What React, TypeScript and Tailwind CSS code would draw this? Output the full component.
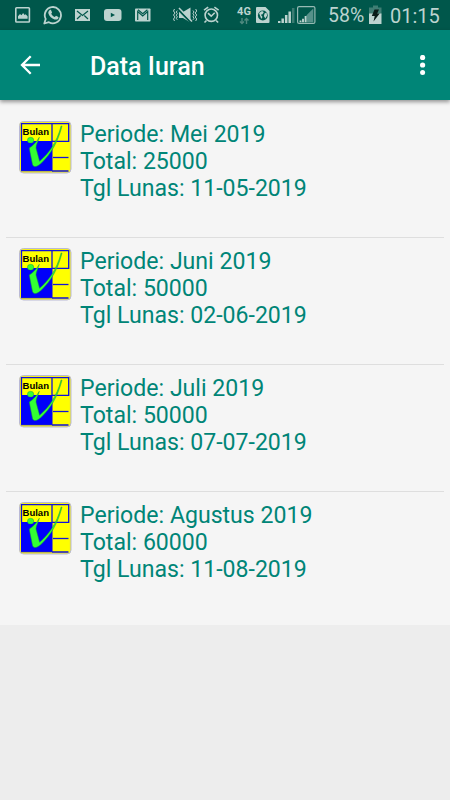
import type { ReactNode } from "react";

type Iuran = { periode: string; total: string; lunas: string };

const DATA: Iuran[] = [
  { periode: "Mei 2019", total: "25000", lunas: "11-05-2019" },
  { periode: "Juni 2019", total: "50000", lunas: "02-06-2019" },
  { periode: "Juli 2019", total: "50000", lunas: "07-07-2019" },
  { periode: "Agustus 2019", total: "60000", lunas: "11-08-2019" },
];

function Glyph({ w, className, children }: { w: number; className: string; children: ReactNode }) {
  return (
    <svg width={w} height={30} viewBox={`0 0 ${w} 30`} className={`shrink-0 ${className}`} fill="none">
      {children}
    </svg>
  );
}

const C = "#bcd3cf";

function StatusBar() {
  return (
    <header className="flex h-[30px] items-center bg-[#00574b] text-[#bcd3cf]">
      {/* gallery */}
      <Glyph w={16} className="ml-[15px]">
        <rect x="0.8" y="7.8" width="13.6" height="14.2" rx="0.8" stroke={C} strokeWidth="1.6" />
        <path d="M3 18.800v-2.600l2-2.200 1.500 1.200 1.600-2.200 1.500 2 1-.8 2 2.100v2.500z" fill={C} />
      </Glyph>
      {/* whatsapp */}
      <Glyph w={20} className="ml-3">
        <path d="M1.300 23.500l1.400-4.600a8.100 8.100 0 1 1 3.200 3.300z" stroke={C} strokeWidth="1.800" strokeLinejoin="round" />
        <path d="M6.500 10.300c.5-.6 1.300-.6 1.600 0l.9 2c.1.5-.5 1-.8 1.500.8 1.600 2 2.700 3.600 3.300l1.200-1.300 2.300 1.100c.4.3.2 1.200-.2 1.800-.8 1-2.300 1.100-3.500.7-2.900-.9-5.300-3.100-6.200-5.900-.3-1.200.2-2.400 1.100-3.200z" fill={C} />
      </Glyph>
      {/* mail */}
      <Glyph w={16} className="ml-3">
        <rect x="0" y="9" width="15" height="12" fill={C} />
        <path d="M2 11l5.500 4.500 5.500-4.500M2 19l3.700-3.500M13 19l-3.700-3.500" stroke="#00574b" strokeWidth="1.200" />
      </Glyph>
      {/* youtube */}
      <Glyph w={18} className="ml-[13px]">
        <rect x="0" y="9" width="17.500" height="12" rx="3" fill={C} />
        <path d="M6.800 12.800v4.400l4.200-2.200z" fill="#00574b" />
      </Glyph>
      {/* gmail */}
      <Glyph w={16} className="ml-[13px]">
        <rect x="0" y="8.500" width="15.500" height="13" rx="0.8" fill={C} />
        <path d="M2.700 20v-8.500l5 4.500 5-4.500V20M3 9.800l4.700 3.900 4.700-3.900" stroke="#00574b" strokeWidth="1.200" />
      </Glyph>
      {/* vibrate, muted */}
      <Glyph w={24} className="ml-[22px]">
        <path d="M1.500 9l-1 2 1.500 2-1.500 2 1.500 2-1.500 2 1 2M4.300 10.500l-1 1.500 1 1.500-1 1.700 1 1.600-1 1.500 1 1.500M22.700 9l1 2-1.500 2 1.500 2-1.500 2 1.500 2-1 2M20 10.500l1 1.500-1 1.500 1 1.700-1 1.600 1 1.500-1 1.500" stroke={C} strokeWidth="1" />
        <path d="M6 12h4l7.500-4.500v15L10 18H6z" fill={C} />
        <path d="M5 9.200l13 13.300" stroke="#00574b" strokeWidth="2" />
        <path d="M6 8l13 13.500" stroke={C} strokeWidth="1.500" />
      </Glyph>
      {/* alarm */}
      <Glyph w={17} className="ml-[6px]">
        <circle cx="8.300" cy="15.200" r="6.200" stroke={C} strokeWidth="1.600" />
        <path d="M5 13.200l3.200 3 3.500-3.500M1 10.200L5.200 7.200M15.600 10.200L11.400 7.200M3.500 20.500l-2 2M13.100 20.500l2 2" stroke={C} strokeWidth="1.600" />
      </Glyph>
      {/* 4G with data arrows */}
      <div className="ml-4 flex h-[30px] w-[16px] flex-col items-center pt-[6px] font-['Roboto','Liberation_Sans',sans-serif]">
        <span className="text-[11px] leading-[11px] font-bold">4G</span>
        <svg width="10" height="8" viewBox="0 0 10 8" fill="none" stroke="#4f897f" strokeWidth="1.400">
          <path d="M3 1v5.500M1 4.500l2 2 2-2M7.500 7V1.500M5.500 3.500l2-2 2 2" />
        </svg>
      </div>
      {/* sim */}
      <Glyph w={14} className="ml-[4px]">
        <path d="M0 8a1 1 0 0 1 1-1h8.500L13.500 11v11a1 1 0 0 1-1 1H1a1 1 0 0 1-1-1z" fill={C} />
        <circle cx="6.800" cy="15.500" r="4.900" fill="#00574b" />
        <path d="M3 13l3-2 1.800 1-1.300 2.200-1.700.6 1.600 2-.5 1.900-1-.8zM8.500 13.500l2-1 .6 3-1.800 3-1.400-2.500z" fill={C} />
      </Glyph>
      {/* signal */}
      <Glyph w={17} className="ml-[8px]">
        <path d="M1.200 21v2M4.700 18.500V23M8.200 15v8M11.700 11.500V23" stroke={C} strokeWidth="2.500" />
        <path d="M15.200 8v15" stroke="#3c7c72" strokeWidth="2.500" />
      </Glyph>
      {/* second signal, framed */}
      <Glyph w={19} className="ml-[2px]">
        <rect x="0.600" y="6.600" width="17.300" height="16.800" rx="1.500" stroke="#96bab4" strokeWidth="1.200" />
        <path d="M9.500 15.300L16.300 8.500v13.800H9.500z" fill="#56918a" />
        <path d="M3.500 20.500V22.300M6 18.800v3.500M8.600 16v6.300" stroke={C} strokeWidth="1.900" />
      </Glyph>
      <span className="ml-[12px] w-[37px] pt-[2px] font-['Roboto','Liberation_Sans',sans-serif] text-[19.5px] leading-[30px] whitespace-nowrap">58%</span>
      {/* battery */}
      <Glyph w={13} className="ml-[4px]">
        <path d="M4 5.500h5v2h3.500v7H0v-7h4z" fill="#3f7e74" />
        <path d="M0 13.500h12.500V24H0z" fill={C} />
        <path d="M5.500 9.500h4.500l-1.800 4h2.500L4.500 21.500l1.200-5.500H2.800z" fill="#081b18" />
      </Glyph>
      <span className="ml-[8px] pt-[2px] font-['Roboto','Liberation_Sans',sans-serif] text-[20px] leading-[30px]">01:15</span>
    </header>
  );
}

function AppBar() {
  return (
    <div className="relative flex h-[70px] items-center bg-[#008577] text-white shadow-[0_2px_4px_rgba(0,0,0,0.4)]">
      <svg width="20" height="20" viewBox="0 0 20 20" className="ml-5 shrink-0" fill="none" stroke="currentColor" strokeWidth="2.300">
        <path d="M20 10H2M10.700 1.300L2 10l8.700 8.700" />
      </svg>
      <h1 className="ml-[50px] pt-[3px] font-['Roboto','Liberation_Sans',sans-serif] text-[25px] leading-[30px] font-medium">Data Iuran</h1>
      <svg width="6" height="20" viewBox="0 0 6 20" className="mr-[24px] ml-auto" fill="currentColor">
        <circle cx="2.600" cy="2.500" r="2.600" />
        <circle cx="2.600" cy="10" r="2.600" />
        <circle cx="2.600" cy="17.500" r="2.500" />
      </svg>
    </div>
  );
}

function BulanIcon() {
  return (
    <svg width="53" height="53" viewBox="0 0 53 53" className="shrink-0">
      <rect x="0.500" y="0.500" width="51.500" height="51.500" rx="4" fill="#f6f01c" stroke="#b9b9d6" />
      <rect x="2.500" y="2.500" width="48" height="47.500" fill="#ffff00" />
      <rect x="2" y="20" width="31.500" height="30" fill="#0000fa" />
      <path d="M2.500 20V2.700H49.700V20.300H33V2.700M33 50H49.500M2 49.700H33" fill="none" stroke="#1010dc" strokeWidth="1.300" />
      <path d="M34 36.500h15.500" stroke="#1414d8" strokeWidth="1.300" />
      <text x="3.500" y="13.500" fontSize="9.300" fontWeight="700" fontFamily="Liberation Sans, Arial, sans-serif" textLength="26.500" lengthAdjust="spacingAndGlyphs" fill="#000">Bulan</text>
      <ellipse cx="11.600" cy="19.200" rx="3.200" ry="2.900" fill="#33ff33" stroke="#168c40" strokeWidth="0.400" />
      <path d="M10.300 27C14 25 17.500 21 20.300 16.300C19.500 20 16.800 24 17 27L20.600 40.300C30 32 37.600 22 42.100 5L43 5.200C38.500 22 32 32.500 23 41.500C19.500 45 15 47.500 13.500 43.500L11 31Z" fill="#33ff33" stroke="#168c40" strokeWidth="0.500" />
    </svg>
  );
}

function Row({ item }: { item: Iuran }) {
  return (
    <li className="flex h-[127px] pt-[10px] pl-[13px]">
      <BulanIcon />
      <div className="ml-[8px] font-['Roboto','Liberation_Sans',sans-serif] text-[23.1px] leading-[27px] whitespace-nowrap text-[#008577]">
        <p>Periode: {item.periode}</p>
        <p>Total: {item.total}</p>
        <p>Tgl Lunas: {item.lunas}</p>
      </div>
    </li>
  );
}

export default function App() {
  return (
    <div className="flex h-[800px] w-[450px] flex-col overflow-hidden bg-[#ededed]">
      <StatusBar />
      <AppBar />
      <main className="h-[525px] bg-[#f5f5f5] px-[6px] pt-[11px]">
        <ul className="divide-y divide-[#dedede]">
          {DATA.map((item) => (
            <Row key={item.periode} item={item} />
          ))}
        </ul>
      </main>
    </div>
  );
}
